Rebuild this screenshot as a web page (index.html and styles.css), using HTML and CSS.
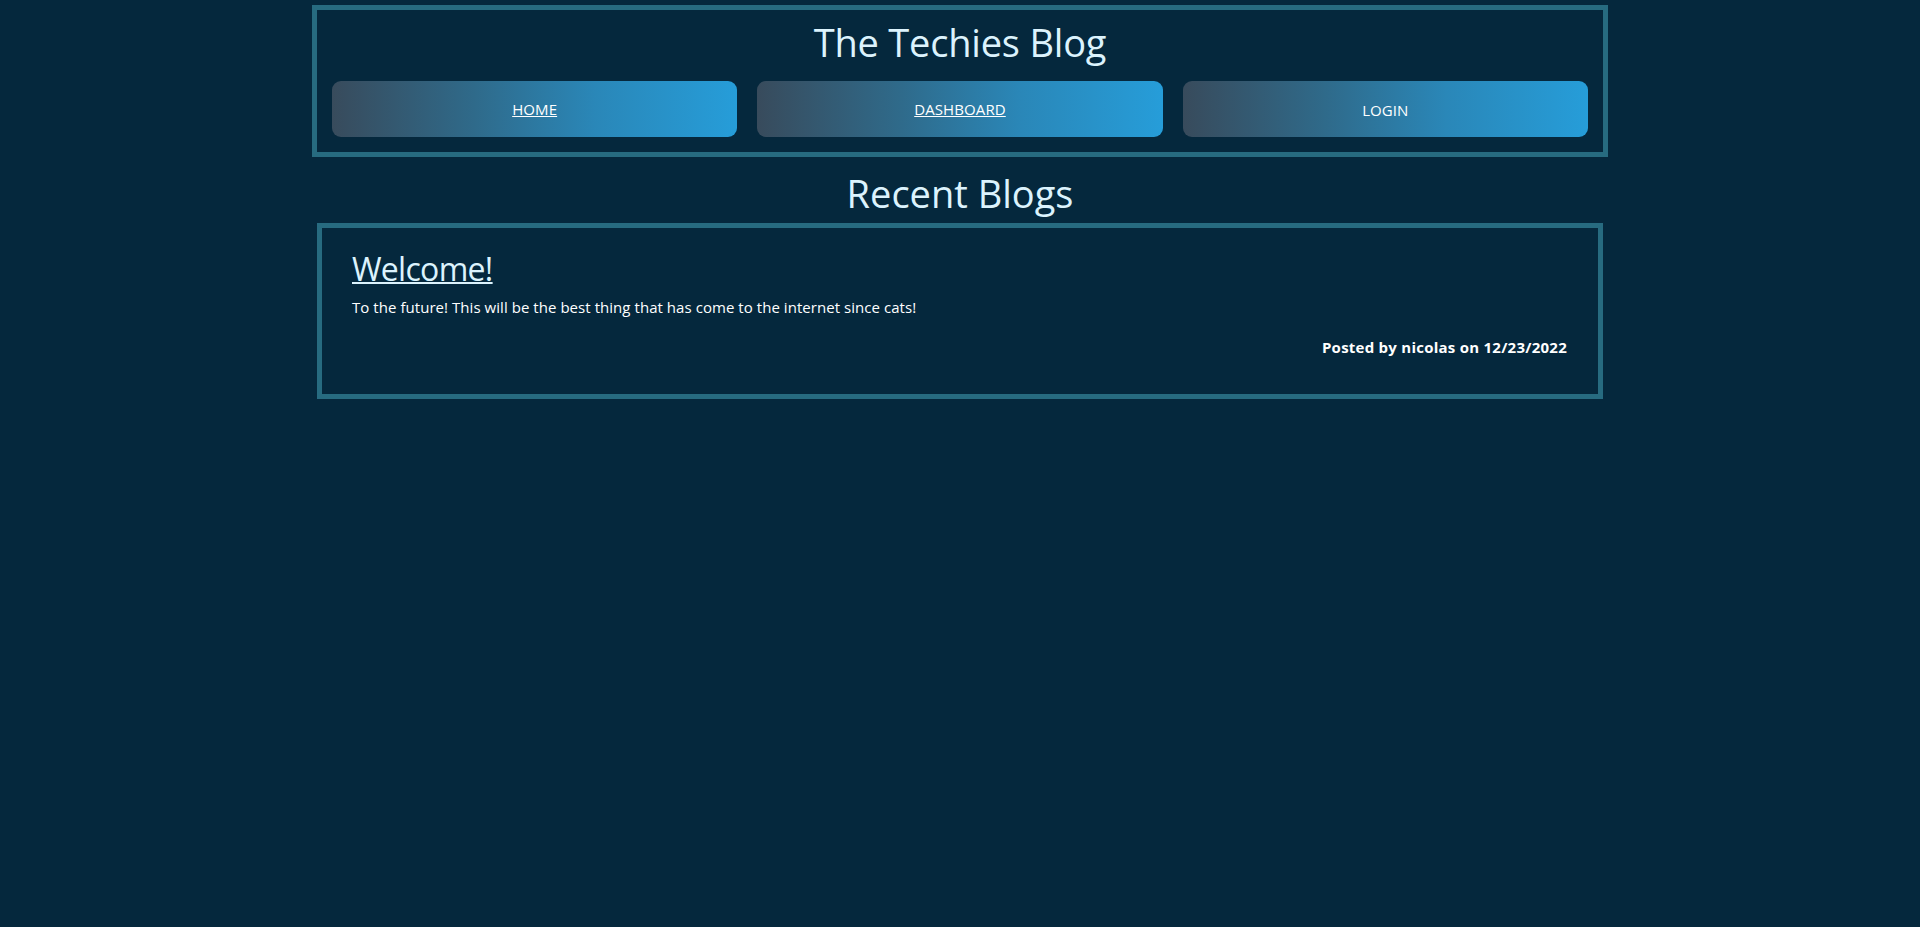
FILE: index.html
```html
<!DOCTYPE html>
<html lang="en">
<head>
<meta charset="utf-8">
<title>The Techies Blog</title>
<link rel="stylesheet" href="styles.css">
</head>
<body>
<header class="site-header">
  <h1 class="site-title">The Techies Blog</h1>
  <nav class="nav">
    <a class="nav-btn nav-link" href="#">HOME</a>
    <a class="nav-btn nav-link" href="#">DASHBOARD</a>
    <button class="nav-btn nav-plain" type="button">LOGIN</button>
  </nav>
</header>
<main class="main">
  <h2 class="section-title">Recent Blogs</h2>
  <article class="post-card">
    <h3 class="post-title"><a href="#">Welcome!</a></h3>
    <p class="post-body">To the future! This will be the best thing that has come to the internet since cats!</p>
    <p class="post-meta">Posted by nicolas on 12/23/2022</p>
  </article>
</main>
</body>
</html>
```

FILE: styles.css
```css
html, body {
  margin: 0;
  padding: 0;
}
body {
  background: #05283d;
  color: #dcf3fd;
  font-family: "Open Sans", "Noto Sans", sans-serif;
  min-height: 927px;
}
.site-header {
  box-sizing: border-box;
  width: 1296px;
  margin: 5px auto 0;
  border: 5px solid #276b80;
  padding: 5px;
}
.site-title {
  margin: 0;
  height: 56px;
  line-height: 54px;
  text-align: center;
  font-weight: 400;
  font-size: 38px;
  letter-spacing: -0.2px;
  color: #dcf3fd;
}
.nav {
  display: flex;
}
.nav-btn {
  flex: 1;
  margin: 10px;
  height: 56px;
  border: none;
  border-radius: 9px;
  background: linear-gradient(to right, #384b5c 0%, #2f6a8a 35%, #2a87b8 65%, #269dd9 100%);
  color: #ffffff;
  font-family: inherit;
  font-size: 15px;
  letter-spacing: 0.1px;
  display: flex;
  align-items: center;
  justify-content: center;
  padding: 0;
}
.nav-link {
  text-decoration: underline;
}
.nav-plain {
  cursor: pointer;
  padding-top: 2px;
}
.main {
  width: 1286px;
  margin: 0 auto;
}
.section-title {
  margin: 0;
  height: 66px;
  line-height: 72px;
  text-align: center;
  font-weight: 400;
  font-size: 38px;
  letter-spacing: 0;
  color: #dcf3fd;
}
.post-card {
  box-sizing: border-box;
  border: 5px solid #276b80;
  padding: 19px 31px 35px 30px;
  height: 176px;
}
.post-title {
  margin: 0;
  font-size: 32px;
  font-weight: 400;
  letter-spacing: -0.7px;
}
.post-title a {
  color: #dcf3fd;
  text-decoration: underline;
  text-decoration-thickness: 2px;
}
.post-body {
  margin: 7px 0 0;
  font-size: 15px;
  letter-spacing: 0.05px;
  color: #ffffff;
}
.post-meta {
  margin: 20px 0 0;
  text-align: right;
  font-size: 15px;
  font-weight: 700;
  letter-spacing: 0.25px;
  color: #ffffff;
}
```
